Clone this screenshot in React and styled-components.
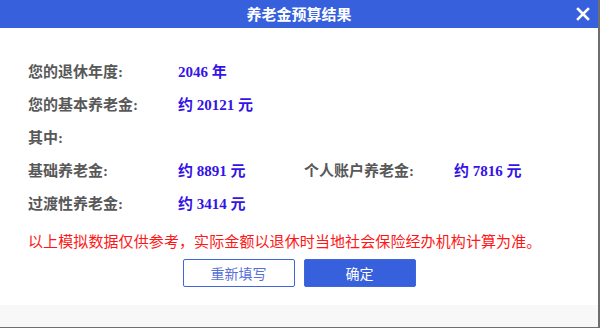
import React from 'react';
import styled, {createGlobalStyle} from 'styled-components';

const GlobalStyle = createGlobalStyle`
  html, body {
    margin: 0;
    padding: 0;
    background: #ffffff;
  }
  * {
    box-sizing: border-box;
  }
`;

const Frame = styled.div`
  width: 600px;
  height: 328px;
  background: #6e6e6e;
  display: flex;
  flex-direction: column;
`;

const Dialog = styled.div`
  width: 598px;
  height: 327px;
  background: #ffffff;
  display: flex;
  flex-direction: column;
`;

const Header = styled.div`
  height: 28px;
  background: #3760dc;
  position: relative;
  display: flex;
  align-items: center;
  justify-content: center;
`;

const Title = styled.div`
  color: #ffffff;
  font-family: "Noto Sans CJK SC", sans-serif;
  font-weight: 700;
  font-size: 15px;
  line-height: 28px;
`;

const Close = styled.div`
  position: absolute;
  right: 8px;
  top: 7px;
  width: 14px;
  height: 14px;
  display: flex;
  svg {
    width: 14px;
    height: 14px;
  }
`;

const Body = styled.div`
  flex: 1;
  padding: 26px 0 0 28px;
  display: flex;
  flex-direction: column;
`;

const Row = styled.div`
  height: 33px;
  display: flex;
  align-items: center;
`;

const Pair = styled.div`
  display: flex;
  align-items: center;
  width: ${({wide}) => (wide ? '276px' : 'auto')};
`;

const Label = styled.span`
  width: 150px;
  color: #585858;
  font-family: "Liberation Serif", "Noto Sans CJK SC", serif;
  font-weight: 700;
  font-size: 15px;
`;

const Value = styled.span`
  color: #3413e6;
  font-family: "Liberation Serif", "Noto Sans CJK SC", serif;
  font-weight: 700;
  font-size: 15px;
`;

const Note = styled.div`
  margin-top: 12px;
  line-height: 20px;
  color: #ff1616;
  font-family: "Noto Sans CJK SC", sans-serif;
  font-size: 15px;
  letter-spacing: 0.1px;
`;

const Buttons = styled.div`
  margin-top: 8px;
  margin-left: -28px;
  display: flex;
  justify-content: center;
  gap: 9px;
`;

const Button = styled.button`
  width: 112px;
  height: 28px;
  border-radius: 2px;
  font-family: "Noto Sans CJK SC", sans-serif;
  font-size: 14px;
  cursor: pointer;
  padding: 0;
  border: 1px solid #3f66dc;
  background: ${({primary}) => (primary ? '#3760dc' : '#ffffff')};
  color: ${({primary}) => (primary ? '#ffffff' : '#5a70d8')};
`;

const Footer = styled.div`
  height: 22px;
  background: #f8f8f8;
`;

const CloseIcon = () => (
  <svg viewBox="0 0 14 14">
    <path d="M2 2 L12 12 M12 2 L2 12" stroke="#ffffff" strokeWidth="2.6" strokeLinecap="square"/>
  </svg>
);

const App = () => (
  <>
    <GlobalStyle/>
    <Frame>
      <Dialog>
        <Header>
          <Title>养老金预算结果</Title>
          <Close><CloseIcon/></Close>
        </Header>
        <Body>
          <Row>
            <Label>您的退休年度:</Label>
            <Value>2046 年</Value>
          </Row>
          <Row>
            <Label>您的基本养老金:</Label>
            <Value>约 20121 元</Value>
          </Row>
          <Row>
            <Label>其中:</Label>
          </Row>
          <Row>
            <Pair wide>
              <Label>基础养老金:</Label>
              <Value>约 8891 元</Value>
            </Pair>
            <Pair>
              <Label>个人账户养老金:</Label>
              <Value>约 7816 元</Value>
            </Pair>
          </Row>
          <Row>
            <Label>过渡性养老金:</Label>
            <Value>约 3414 元</Value>
          </Row>
          <Note>以上模拟数据仅供参考，实际金额以退休时当地社会保险经办机构计算为准。</Note>
          <Buttons>
            <Button>重新填写</Button>
            <Button primary>确定</Button>
          </Buttons>
        </Body>
        <Footer/>
      </Dialog>
    </Frame>
  </>
);

export default App;
